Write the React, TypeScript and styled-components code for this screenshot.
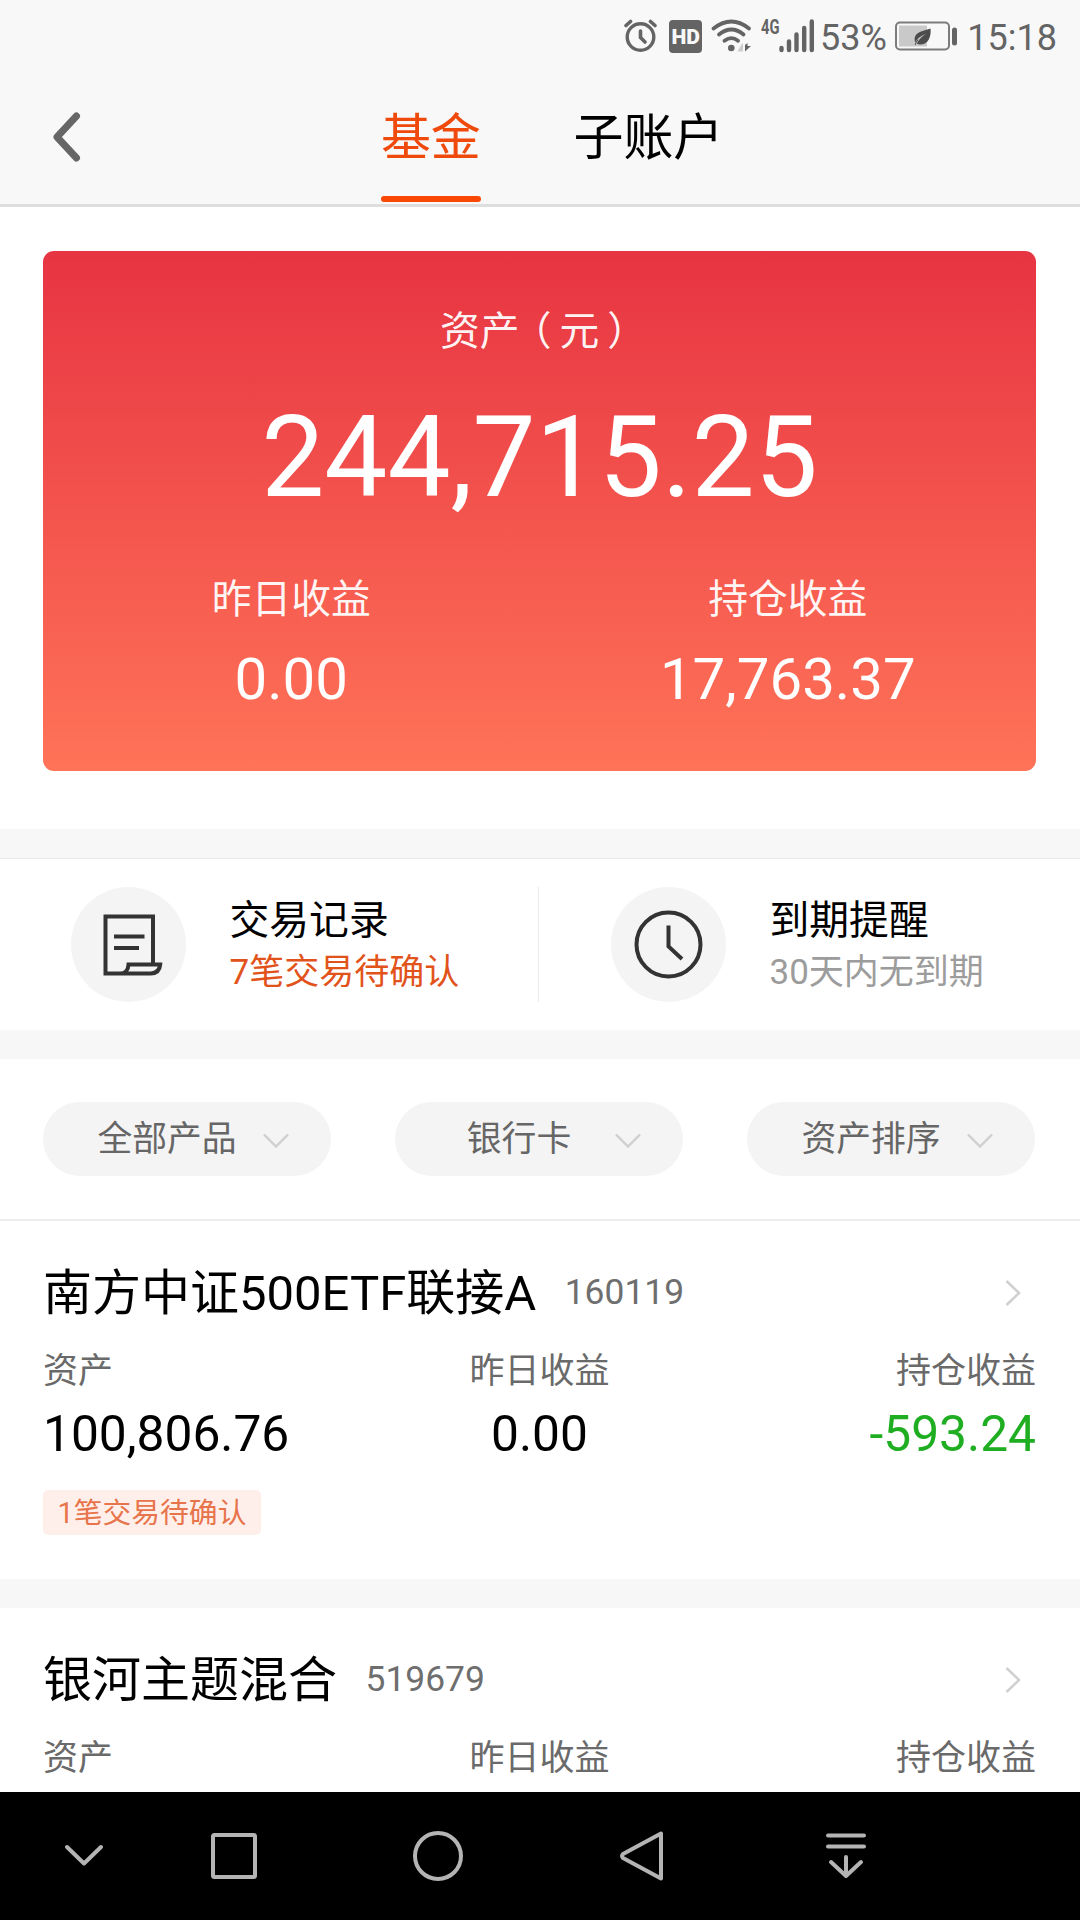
import React from "react";
import styled, { createGlobalStyle } from "styled-components";

const GlobalStyle = createGlobalStyle`
  * { box-sizing: border-box; }
  body {
    margin: 0;
    background: #fff;
    font-family: Roboto, "Noto Sans CJK SC", sans-serif;
    color: #000;
  }
  svg { display: block; flex: none; }
`;

const Screen = styled.div`
  display: flex;
  flex-direction: column;
  width: 1080px;
  height: 1920px;
  overflow: hidden;
  background: #fff;
`;

const Header = styled.header`
  flex: none;
  background: #f8f8f8;
  border-bottom: 3px solid #dedede;
`;

const StatusBar = styled.div`
  display: flex;
  align-items: center;
  height: 72px;
  padding-left: 624px;
  color: #646464;
`;

const StatusText = styled.span<{ $left: number }>`
  margin-left: ${(p) => p.$left}px;
  font-size: 36px;
  line-height: 44px;
  padding-top: 3px;
  white-space: nowrap;
`;

const StatusIcon = styled.svg<{ $left?: number }>`
  margin-left: ${(p) => p.$left ?? 0}px;
`;

const TitleBar = styled.nav`
  display: flex;
  height: 132px;
`;

const BackButton = styled.button`
  display: flex;
  align-items: center;
  width: 381px;
  padding: 0 0 2px 51.5px;
  border: 0;
  background: none;
`;

const Tab = styled.div<{ $active?: boolean }>`
  display: flex;
  flex-direction: column;
  justify-content: space-between;
  margin-right: 93px;
  padding: 31px 0 2px;
  font-size: 50px;
  line-height: 70px;
  letter-spacing: -0.2px;
  white-space: nowrap;
  color: ${(p) => (p.$active ? "#ef4a0c" : "#000")};

  &::after {
    content: "";
    height: 6px;
    border-radius: 3px;
    background: ${(p) => (p.$active ? "#f94805" : "transparent")};
  }
`;

const Summary = styled.section`
  flex: none;
  height: 622px;
  padding: 44px 44px 0 43px;
`;

const Card = styled.div`
  display: flex;
  flex-direction: column;
  height: 520px;
  padding-top: 53px;
  border-radius: 11px;
  background: linear-gradient(#e73442, #ff7358);
  color: #fff;
  text-align: center;
`;

const CardLabel = styled.div`
  font-size: 39.8px;
  line-height: 56px;
  color: rgba(255, 255, 255, 0.94);
`;

const Paren = styled.span<{ $before: number; $after: number }>`
  font-family: "Noto Sans CJK SC", sans-serif;
  font-feature-settings: "halt";
  line-height: 1;
  padding-left: ${(p) => p.$before}em;
  padding-right: ${(p) => p.$after}em;
`;

const Total = styled.div`
  margin: 33px 0 49px;
  font-size: 112.3px;
  line-height: 130px;
`;

const CardColumns = styled.div`
  display: grid;
  grid-template-columns: 1fr 1fr;
`;

const CardValue = styled.div`
  margin-top: 16px;
  font-size: 58.2px;
  line-height: 70px;
`;

const Gap = styled.div<{ $line?: boolean }>`
  flex: none;
  height: ${(p) => (p.$line ? 30 : 29)}px;
  background: #f7f7f7;
  border-bottom: ${(p) => (p.$line ? "1px solid #e8e8e8" : "0")};
`;

const Shortcuts = styled.section`
  flex: none;
  display: grid;
  grid-template-columns: 539px 541px;
  height: 171px;
  padding: 28px 0;
`;

const Shortcut = styled.div<{ $divided?: boolean }>`
  display: flex;
  padding-left: ${(p) => (p.$divided ? 71 : 72)}px;
  border-right: ${(p) => (p.$divided ? "1px solid #ebebeb" : "0")};
`;

const Disc = styled.div`
  display: flex;
  width: 115px;
  height: 115px;
  border-radius: 50%;
  background: #f4f4f4;
`;

const ShortcutText = styled.div`
  margin-left: 43.5px;
  padding-top: 7px;
`;

const ShortcutTitle = styled.div`
  font-size: 39.8px;
  line-height: 54px;
`;

const ShortcutNote = styled.div<{ $alert?: boolean }>`
  margin-top: 1px;
  font-size: 35px;
  line-height: 48px;
  color: ${(p) => (p.$alert ? "#e2531b" : "#9c9c9c")};
`;

const Filters = styled.section`
  flex: none;
  display: flex;
  justify-content: space-between;
  height: 162px;
  padding: 43px 45px 0 43px;
  border-bottom: 2px solid #ececec;
`;

const Pill = styled.button`
  display: flex;
  align-items: center;
  width: 288px;
  height: 74px;
  padding: 0 0 0 28px;
  border: 0;
  border-radius: 37px;
  background: #f4f4f4;
  font-family: inherit;
  font-size: 34.8px;
  line-height: 48px;
  color: #666;

  svg {
    margin-top: 3px;
  }
`;

const PillLabel = styled.span`
  width: 192px;
  text-align: center;
`;

const Fund = styled.article<{ $clipped?: boolean }>`
  flex: none;
  height: ${(p) => (p.$clipped ? 184 : 358)}px;
  padding: 36px 44px 0 43px;
  overflow: hidden;
`;

const FundHead = styled.div`
  display: flex;
  align-items: center;
  height: 72px;
`;

const FundName = styled.h2`
  margin: 0;
  padding-top: 2px;
  font-size: 49px;
  line-height: 72px;
  font-weight: 400;
  white-space: nowrap;
`;

const FundCode = styled.span`
  flex: 1;
  margin-left: 28.5px;
  padding-bottom: 2px;
  font-size: 35.4px;
  line-height: 72px;
  color: #6e6e6e;
`;

const FundGrid = styled.div`
  display: grid;
  grid-template-columns: 1fr 1fr 1fr;
  margin-top: 18px;
`;

const Cell = styled.div<{ $align: "left" | "center" | "right" }>`
  text-align: ${(p) => p.$align};
`;

const CellLabel = styled.div`
  font-size: 35px;
  line-height: 50px;
  color: #6a6a6a;
`;

const CellValue = styled.div<{ $loss?: boolean }>`
  margin-top: 7px;
  font-size: 49.7px;
  line-height: 60px;
  color: ${(p) => (p.$loss ? "#1fae22" : "#000")};
`;

const Badge = styled.span`
  display: inline-block;
  height: 45px;
  margin-top: 26px;
  padding: 0 14.5px;
  border-radius: 5px;
  background: #ffefea;
  font-size: 28.8px;
  line-height: 46px;
  color: #e7744b;
`;

const SystemNav = styled.footer`
  flex: none;
  display: flex;
  align-items: center;
  height: 128px;
  background: #000;
`;

const NavIcon = styled.svg<{ $left: number }>`
  margin-left: ${(p) => p.$left}px;
  fill: none;
  stroke: #b4b4b4;
  stroke-width: 4;
  stroke-linecap: round;
  stroke-linejoin: round;
`;

const ChevronDown = () => (
  <svg width="26" height="16" viewBox="0 0 26 16" fill="none" stroke="#cfcfcf" strokeWidth="2.4">
    <path d="M1 1.5 13 13.5 25 1.5" />
  </svg>
);

const ChevronRight = () => (
  <svg width="31" height="28" viewBox="0 0 31 28" fill="none" stroke="#d0d0d0" strokeWidth="2.6">
    <path d="M1.5 2 14 14 1.5 26" />
  </svg>
);

const Receipt = () => (
  <svg width="115" height="115" viewBox="0 0 115 115" fill="none" stroke="#333" strokeWidth="4">
    <path d="M82 77.500V29.500H34.500V86.500H80Q88.500 86 89.200 77.500H57.500Q57 86.500 49 86.500" />
    <path d="M43 49.500H73.500M43 61H68" />
  </svg>
);

const Clock = () => (
  <svg width="115" height="115" viewBox="0 0 115 115" fill="none" stroke="#333" strokeWidth="4">
    <circle cx="57.500" cy="57.500" r="32" />
    <path d="M57.500 38.500V59.500L71 72" />
  </svg>
);

const StatusIcons = () => (
  <>
    <StatusIcon width="33" height="34" viewBox="0 0 33 34" fill="none" stroke="#646464" strokeLinecap="round">
      <circle cx="16.500" cy="18" r="13.300" strokeWidth="3.400" />
      <path d="M16.500 12V18.500L21 23" strokeWidth="3.600" />
      <path d="M2 6.500 6.500 2.500M31 6.500 26.500 2.500" strokeWidth="3.600" />
    </StatusIcon>
    <StatusIcon $left={12} width="33" height="33" viewBox="0 0 33 33">
      <rect width="33" height="33" rx="4" fill="#646464" />
      <text
        x="2.500"
        y="23.800"
        fontSize="20.500"
        fontWeight="900"
        fill="#f8f8f8"
        textLength="28.500"
        lengthAdjust="spacingAndGlyphs"
      >
        HD
      </text>
    </StatusIcon>
    <StatusIcon $left={9} width="41" height="34" viewBox="0 0 41 34" fill="none" stroke="#646464" strokeWidth="3.700" strokeLinecap="round">
      <path d="M2.500 9.500Q20.500-4.500 38 9.500M8 15.500Q20.500 5.500 32.500 15.500M13.500 21.800Q20.500 16.500 27 21.800" />
      <circle cx="20.300" cy="29" r="3.300" fill="#646464" stroke="none" />
      <path d="M26.500 32.500 31 24.500H32V32.500Z" fill="#ccc" stroke="none" />
      <path d="M34 26V32.500L40 27H36.500V24Z" fill="#646464" stroke="none" />
    </StatusIcon>
    <StatusIcon $left={9} width="54" height="46" viewBox="0 -6 54 46">
      <text
        x="0"
        y="15"
        fontSize="20"
        fontWeight="700"
        fill="#646464"
        textLength="18.500"
        lengthAdjust="spacingAndGlyphs"
      >
        4G
      </text>
      <path
        d="M20.500 29V31M28 22.500V31M35.500 15.500V31M43.200 9V31M50.800 2.500V31"
        stroke="#646464"
        strokeWidth="4.400"
        strokeLinecap="round"
      />
    </StatusIcon>
  </>
);

const Battery = () => (
  <StatusIcon $left={8.5} width="63" height="30" viewBox="0 0 63 30">
    <rect x="1" y="1.500" width="53" height="27" rx="4" fill="none" stroke="#7c7c7c" strokeWidth="2" />
    <rect x="4" y="4.500" width="28" height="21" fill="#c9c9c9" />
    <path d="M35.500 7.500C36.500 16 33 23.500 25.500 23.500Q23 23.500 21.800 22.500Q24.500 17 31 12.800Q23 16 20.200 21.500C17.500 11 27 10.500 35.500 7.500Z" fill="#4c4c4c" />
    <path d="M20.200 24Q21 21 23 18.500" stroke="#4c4c4c" strokeWidth="1" fill="none" />
    <rect x="57" y="6.500" width="5" height="18" rx="2.500" fill="#646464" />
  </StatusIcon>
);

type FundData = { name: string; code: string; asset?: string; daily?: string; held?: string; pending?: string };

const funds: FundData[] = [
  { name: "南方中证500ETF联接A", code: "160119", asset: "100,806.76", daily: "0.00", held: "-593.24", pending: "1笔交易待确认" },
  { name: "银河主题混合", code: "519679" },
];

const FundItem = ({ fund }: { fund: FundData }) => (
  <Fund $clipped={!fund.asset}>
    <FundHead>
      <FundName>{fund.name}</FundName>
      <FundCode>{fund.code}</FundCode>
      <ChevronRight />
    </FundHead>
    <FundGrid>
      <Cell $align="left">
        <CellLabel>资产</CellLabel>
        {fund.asset && <CellValue>{fund.asset}</CellValue>}
      </Cell>
      <Cell $align="center">
        <CellLabel>昨日收益</CellLabel>
        {fund.daily && <CellValue>{fund.daily}</CellValue>}
      </Cell>
      <Cell $align="right">
        <CellLabel>持仓收益</CellLabel>
        {fund.held && <CellValue $loss={fund.held.startsWith("-")}>{fund.held}</CellValue>}
      </Cell>
    </FundGrid>
    {fund.pending && <Badge>{fund.pending}</Badge>}
  </Fund>
);

export default function App() {
  return (
    <Screen>
      <GlobalStyle />
      <Header>
        <StatusBar>
          <StatusIcons />
          <StatusText $left={5}>53%</StatusText>
          <Battery />
          <StatusText $left={9}>15:18</StatusText>
        </StatusBar>
        <TitleBar>
          <BackButton>
            <svg width="30" height="50" viewBox="0 0 30 50" fill="none" stroke="#666" strokeWidth="7" strokeLinecap="round" strokeLinejoin="round">
              <path d="M24.500 4 5 25 24.500 46" />
            </svg>
          </BackButton>
          <Tab $active>基金</Tab>
          <Tab>子账户</Tab>
        </TitleBar>
      </Header>

      <Summary>
        <Card>
          <CardLabel>
            资产
            <Paren $before={0.3} $after={0.2}>（</Paren>
            元
            <Paren $before={0.2} $after={0.3}>）</Paren>
          </CardLabel>
          <Total>244,715.25</Total>
          <CardColumns>
            <div>
              <CardLabel>昨日收益</CardLabel>
              <CardValue>0.00</CardValue>
            </div>
            <div>
              <CardLabel>持仓收益</CardLabel>
              <CardValue>17,763.37</CardValue>
            </div>
          </CardColumns>
        </Card>
      </Summary>

      <Gap $line />
      <Shortcuts>
        <Shortcut $divided>
          <Disc><Receipt /></Disc>
          <ShortcutText>
            <ShortcutTitle>交易记录</ShortcutTitle>
            <ShortcutNote $alert>7笔交易待确认</ShortcutNote>
          </ShortcutText>
        </Shortcut>
        <Shortcut>
          <Disc><Clock /></Disc>
          <ShortcutText>
            <ShortcutTitle>到期提醒</ShortcutTitle>
            <ShortcutNote>30天内无到期</ShortcutNote>
          </ShortcutText>
        </Shortcut>
      </Shortcuts>
      <Gap />

      <Filters>
        {["全部产品", "银行卡", "资产排序"].map((label) => (
          <Pill key={label}>
            <PillLabel>{label}</PillLabel>
            <ChevronDown />
          </Pill>
        ))}
      </Filters>

      <FundItem fund={funds[0]} />
      <Gap />
      <FundItem fund={funds[1]} />

      <SystemNav>
        <NavIcon $left={64} width="40" height="24" viewBox="0 0 40 24">
          <path d="M3 3 20 19.500 37 3" />
        </NavIcon>
        <NavIcon $left={106} width="48" height="48" viewBox="0 0 48 48">
          <rect x="3" y="3" width="42" height="42" rx="1.500" />
        </NavIcon>
        <NavIcon $left={154} width="52" height="52" viewBox="0 0 52 52">
          <circle cx="26" cy="26" r="23" />
        </NavIcon>
        <NavIcon $left={155} width="46" height="52" viewBox="0 0 46 52">
          <path d="M42 3.500V48.500L4 28Q2 26 4 24Z" />
        </NavIcon>
        <NavIcon $left={159} width="44" height="48" viewBox="0 0 44 48">
          <path d="M4 3.500H40M4 14.500H40M22 25V43M7 30 22 44 37 30" />
        </NavIcon>
      </SystemNav>
    </Screen>
  );
}
